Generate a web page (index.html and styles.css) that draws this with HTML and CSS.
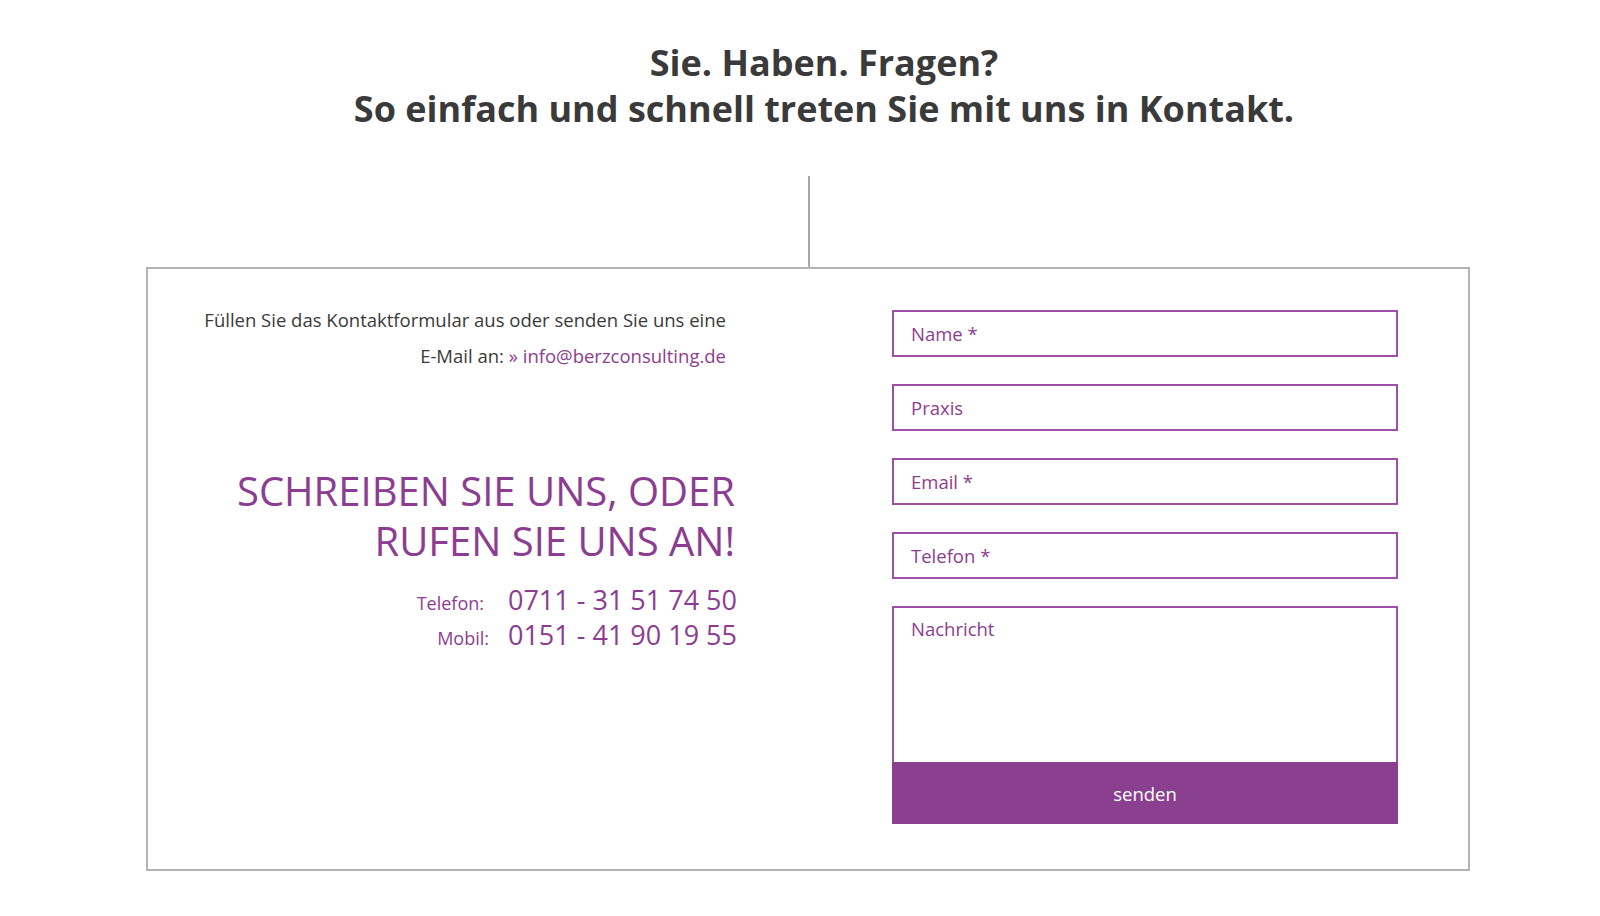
FILE: index.html
```html
<!DOCTYPE html>
<html lang="de">
<head>
<meta charset="utf-8">
<title>Kontakt</title>
<link rel="stylesheet" href="styles.css">
</head>
<body>
<section class="contact">
  <h1 class="title">Sie. Haben. Fragen?<br>So einfach und schnell treten Sie mit uns in Kontakt.</h1>
  <div class="connector"></div>
  <div class="box">
    <div class="info">
      <p class="intro">Füllen Sie das Kontaktformular aus oder senden Sie uns eine<br>E-Mail an: <a href="#" class="mail">» info@berzconsulting.de</a></p>
      <h2 class="call">SCHREIBEN SIE UNS, ODER<br>RUFEN SIE UNS AN!</h2>
      <div class="phones">
        <div class="phone"><span class="label">Telefon:</span><span class="num">0711 - 31 51 74 50</span></div>
        <div class="phone"><span class="label label-mobil">Mobil:</span><span class="num">0151 - 41 90 19 55</span></div>
      </div>
    </div>
    <form class="form">
      <input class="field" type="text" placeholder="Name *">
      <input class="field" type="text" placeholder="Praxis">
      <input class="field" type="email" placeholder="Email *">
      <input class="field" type="tel" placeholder="Telefon *">
      <textarea class="field message" placeholder="Nachricht"></textarea>
      <button class="send" type="button">senden</button>
    </form>
  </div>
</section>
</body>
</html>
```

FILE: styles.css
```css
* { box-sizing: border-box; }
html, body { margin: 0; padding: 0; background: #fff; }
body { font-family: "Open Sans", "Noto Sans", sans-serif; }

.contact { padding-top: 40px; padding-bottom: 46px; }

.title {
  margin: 0;
  padding-left: 48px;
  text-align: center;
  font-size: 36px;
  line-height: 46px;
  font-weight: 700;
  color: #3a3a3a;
}

.connector {
  width: 2px;
  height: 91px;
  margin: 44px 0 0 808px;
  background: #a8a8a8;
}

.box {
  margin: 0 130px 0 146px;
  border: 2px solid #b3b3b3;
  display: flex;
  padding: 41px 0 45px 0;
}

.info {
  width: 589px;
  text-align: right;
  margin-top: -8px;
}

.intro {
  margin: 0;
  padding-right: 11px;
  font-size: 18.5px;
  line-height: 36px;
  color: #3a3a3a;
}
.mail { color: #8c3d91; text-decoration: none; }

.call {
  margin: 92px 0 0 0;
  padding-right: 2px;
  font-size: 40px;
  line-height: 50px;
  font-weight: 400;
  color: #8c3d91;
}

.phones { margin-top: 15px; }
.phone {
  display: flex;
  justify-content: flex-end;
  align-items: baseline;
  height: 35px;
  color: #8c3d91;
}
.label { font-size: 18px; margin-right: 24px; }
.label-mobil { margin-right: 19px; }
.num { font-size: 27px; }

.form {
  margin-left: 155px;
  width: 506px;
  display: flex;
  flex-direction: column;
}

.field {
  height: 47px;
  margin: 0 0 27px 0;
  border: 2px solid #a04fa6;
  padding: 0 17px;
  font-family: "Open Sans", "Noto Sans", sans-serif;
  font-size: 18.5px;
  color: #8c3d91;
  background: #fff;
  outline: none;
}
.field::placeholder { color: #8c3d91; opacity: 1; }

.message {
  height: 156px;
  margin: 0;
  padding-top: 8px;
  resize: none;
  border-bottom: none;
}

.send {
  height: 62px;
  border: none;
  background: #8b3f8f;
  color: #fff;
  font-family: "Open Sans", "Noto Sans", sans-serif;
  font-size: 18.5px;
  cursor: pointer;
}
```
